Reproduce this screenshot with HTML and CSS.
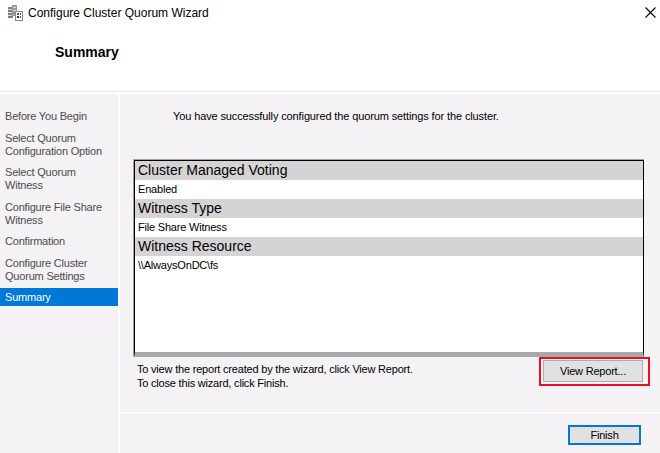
FILE: index.html
```html
<!DOCTYPE html>
<html>
<head>
<meta charset="utf-8">
<title>Configure Cluster Quorum Wizard</title>
<link rel="stylesheet" href="styles.css">
</head>
<body>
<div class="window">
  <header class="top">
    <div class="titlebar">
      <svg class="app-icon" width="16" height="16" viewBox="0 0 16 16">
        <rect x="1" y="2" width="5" height="11" fill="#7d7d7d"/>
        <rect x="5" y="0" width="5" height="11" fill="#9a9a9a"/>
        <g fill="#d9d9d9">
          <rect x="1" y="4" width="4" height="1"/>
          <rect x="1" y="7" width="4" height="1"/>
          <rect x="1" y="10" width="4" height="1"/>
          <rect x="6" y="2" width="3" height="1"/>
          <rect x="6" y="5" width="3" height="1"/>
        </g>
        <rect x="2" y="12" width="2" height="1" fill="#3a9a3a"/>
        <rect x="8.5" y="6.5" width="7" height="9" fill="#fff" stroke="#8a8a8a"/>
        <rect x="10" y="8" width="2" height="2" fill="#d02a2a"/>
        <rect x="13" y="8" width="1" height="2" fill="#555"/>
        <rect x="10" y="11" width="2" height="2" fill="#333"/>
        <rect x="13" y="11" width="1" height="2" fill="#555"/>
      </svg>
      <span class="title">Configure Cluster Quorum Wizard</span>
      <svg class="close" width="11" height="11" viewBox="0 0 11 11">
        <path d="M0.5 0.5 L10.5 10.5 M10.5 0.5 L0.5 10.5" stroke="#000" stroke-width="1.1" fill="none"/>
      </svg>
    </div>
    <h1 class="page-title">Summary</h1>
  </header>
  <div class="body">
    <nav class="steps">
      <div class="step">Before You Begin</div>
      <div class="step">Select Quorum<br>Configuration Option</div>
      <div class="step">Select Quorum<br>Witness</div>
      <div class="step">Configure File Share<br>Witness</div>
      <div class="step">Confirmation</div>
      <div class="step">Configure Cluster<br>Quorum Settings</div>
      <div class="step active">Summary</div>
    </nav>
    <main class="main">
      <div class="content">
        <p class="intro">You have successfully configured the quorum settings for the cluster.</p>
        <div class="listbox">
          <div class="listinner">
            <div class="row head">Cluster Managed Voting</div>
            <div class="row val">Enabled</div>
            <div class="row head">Witness Type</div>
            <div class="row val">File Share Witness</div>
            <div class="row head">Witness Resource</div>
            <div class="row val">\\AlwaysOnDC\fs</div>
          </div>
        </div>
        <div class="report-row">
          <div class="hint">To view the report created by the wizard, click View Report.<br>To close this wizard, click Finish.</div>
          <div class="highlight"><button class="btn report">View Report...</button></div>
        </div>
      </div>
      <div class="footer">
        <button class="btn finish">Finish</button>
      </div>
    </main>
  </div>
</div>
</body>
</html>
```

FILE: styles.css
```css
html, body {
  margin: 0;
  padding: 0;
}

body {
  width: 660px;
  height: 453px;
  overflow: hidden;
  background: #ffffff;
  font-family: "Liberation Sans", Arial, sans-serif;
  color: #000;
}

.window {
  display: flex;
  flex-direction: column;
  height: 453px;
}

.top {
  height: 91px;
  border-bottom: 1px solid #e6e6e6;
  background: #fff;
}

.titlebar {
  height: 26px;
  display: flex;
  align-items: center;
}

.app-icon {
  margin-left: 7px;
  flex: none;
}

.title {
  margin-left: 5px;
  font-size: 12px;
  line-height: 16px;
  color: #000;
}

.close {
  margin-left: auto;
  margin-right: 4px;
  margin-top: -2px;
}

.page-title {
  margin: 18px 0 0 55px;
  font-size: 14px;
  line-height: 17px;
  font-weight: bold;
}

.body {
  margin-top: 2px;
  flex: 1;
  display: flex;
  gap: 2px;
  background: #fff;
}

.steps {
  width: 118px;
  flex: none;
  background: #f5f2f5;
  padding-top: 13px;
  display: flex;
  flex-direction: column;
  gap: 3.5px;
}

.step {
  padding: 3px 5px 2px;
  font-size: 11px;
  line-height: 13px;
  letter-spacing: -0.2px;
  color: #4c4c4c;
}

.step.active {
  background: #0078d7;
  color: #fff;
}

.main {
  flex: 1;
  display: flex;
  flex-direction: column;
  background: #f5f2f5;
}

.content {
  height: 318px;
  display: flex;
  flex-direction: column;
}

.intro {
  margin: 15px 0 0 53px;
  font-size: 11px;
  line-height: 14px;
  letter-spacing: -0.12px;
}

.listbox {
  margin: 36px 16px 0 13px;
  height: 198px;
  box-sizing: border-box;
  border-top: 1px solid #a0a0a0;
  border-left: 1px solid #a0a0a0;
  display: flex;
}

.listinner {
  flex: 1;
  background: #fff;
  border: 1px solid #000;
  border-bottom: 5px solid #a9a9a9;
}

.row {
  height: 19px;
  line-height: 19px;
  padding-left: 3px;
  white-space: nowrap;
}

.row.head {
  background: #d5d3d5;
  font-size: 14px;
}

.row.val {
  background: #fff;
  font-size: 11px;
  letter-spacing: -0.2px;
}

.report-row {
  display: flex;
  justify-content: space-between;
  align-items: flex-start;
  padding: 0 10px 0 17px;
}

.hint {
  margin-top: 5px;
  font-size: 11px;
  line-height: 14px;
  letter-spacing: -0.2px;
}

.highlight {
  border: 2px solid #e81123;
  padding: 1px 5px 2px 2px;
}

.btn {
  font-family: "Liberation Sans", Arial, sans-serif;
  font-size: 11px;
  letter-spacing: -0.2px;
  color: #000;
  background: #e1e1e1;
  margin: 0;
  padding: 0;
  box-sizing: border-box;
}

.btn.report {
  display: block;
  width: 100px;
  height: 22px;
  border: 1px solid #adadad;
}

.footer {
  flex: 1;
  border-top: 1px solid #ffffff;
  display: flex;
  justify-content: flex-end;
  align-items: flex-start;
  padding: 12px 19px 0 0;
}

.btn.finish {
  width: 73px;
  height: 20px;
  border: 2px solid #0078d7;
}
```
